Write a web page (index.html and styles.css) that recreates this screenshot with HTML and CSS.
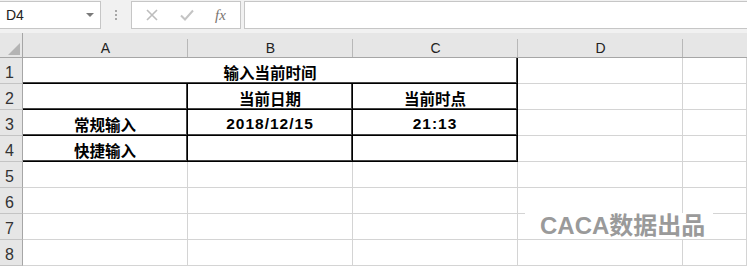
FILE: index.html
```html
<!DOCTYPE html>
<html lang="zh-CN">
<head>
    <meta charset="UTF-8">
    <title>输入当前时间</title>
    <link rel="stylesheet" href="styles.css">
</head>
<body>
    <div class="toolbar">
        <div class="namebox">
            <span class="cellref">D4</span>
            <span class="caret"></span>
        </div>
        <div class="grip"><i></i><i></i><i></i></div>
        <div class="fnbox">
            <svg class="icon" width="14" height="14" viewBox="0 0 14 14">
                <path d="M2 2 L12 12 M12 2 L2 12" stroke="#bdbdbd" stroke-width="1.6" fill="none"/>
            </svg>
            <svg class="icon" width="14" height="14" viewBox="0 0 14 14">
                <path d="M1 7.5 L5 11.5 L13 2.5" stroke="#c4c4c4" stroke-width="2" fill="none"/>
            </svg>
            <span class="fx">fx</span>
        </div>
        <div class="formula"></div>
    </div>

    <div class="sheet">
        <div class="corner"><span class="tri"></span></div>
        <div class="colhead">A</div>
        <div class="colhead">B</div>
        <div class="colhead">C</div>
        <div class="colhead">D</div>
        <div class="colhead last"></div>

        <div class="rowhead">1</div>
        <div class="cell b merged">输入当前时间</div>
        <div class="cell"></div>
        <div class="cell"></div>

        <div class="rowhead">2</div>
        <div class="cell b"></div>
        <div class="cell b">当前日期</div>
        <div class="cell b">当前时点</div>
        <div class="cell"></div>
        <div class="cell"></div>

        <div class="rowhead">3</div>
        <div class="cell b">常规输入</div>
        <div class="cell b num">2018/12/15</div>
        <div class="cell b num">21:13</div>
        <div class="cell"></div>
        <div class="cell"></div>

        <div class="rowhead">4</div>
        <div class="cell b">快捷输入</div>
        <div class="cell b"></div>
        <div class="cell b"></div>
        <div class="cell"></div>
        <div class="cell"></div>

        <div class="rowhead">5</div>
        <div class="cell"></div><div class="cell"></div><div class="cell"></div><div class="cell"></div><div class="cell"></div>
        <div class="rowhead">6</div>
        <div class="cell"></div><div class="cell"></div><div class="cell"></div><div class="cell"></div><div class="cell"></div>
        <div class="rowhead">7</div>
        <div class="cell"></div><div class="cell"></div><div class="cell"></div><div class="cell"></div><div class="cell"></div>
        <div class="rowhead">8</div>
        <div class="cell"></div><div class="cell"></div><div class="cell"></div><div class="cell"></div><div class="cell"></div>
    </div>

    <div class="watermark">CACA数据出品</div>
</body>
</html>
```

FILE: styles.css
```css
* {
    box-sizing: border-box;
}
body {
    margin: 0;
    width: 747px;
    height: 269px;
    overflow: hidden;
    background-color: white;
    font-family: "Liberation Sans", "Noto Sans CJK SC", sans-serif;
    color: #000;
    position: relative;
}
.toolbar {
    display: flex;
    height: 33px;
    padding-top: 1px;
    background-color: #f1f1f1;
}
.namebox {
    width: 101px;
    height: 28px;
    background-color: white;
    border: 1px solid #c6c6c6;
    border-left: none;
    display: flex;
    align-items: center;
    justify-content: space-between;
    padding: 0 6px 0 6px;
}
.cellref {
    font-size: 14px;
    color: #222;
}
.caret {
    width: 0;
    height: 0;
    border-left: 4px solid transparent;
    border-right: 4px solid transparent;
    border-top: 4px solid #7a7a7a;
}
.grip {
    width: 30px;
    height: 28px;
    display: flex;
    flex-direction: column;
    align-items: center;
    justify-content: center;
    gap: 2px;
}
.grip i {
    width: 2px;
    height: 2px;
    background-color: #a8a8a8;
}
.fnbox {
    width: 110px;
    height: 28px;
    background-color: white;
    border: 1px solid #c6c6c6;
    display: flex;
    align-items: center;
    padding-left: 13px;
}
.fnbox .icon {
    margin-right: 21px;
}
.fx {
    font-family: "Liberation Serif", serif;
    font-style: italic;
    font-size: 15px;
    color: #7a7470;
}
.formula {
    flex: 1;
    height: 28px;
    margin-left: 3px;
    background-color: white;
    border: 1px solid #c6c6c6;
    border-right: none;
}
.sheet {
    display: grid;
    grid-template-columns: 23px 165px 165px 165px 165px 1fr;
    grid-template-rows: 25px repeat(8, 26px) 1fr;
}
.corner {
    background-color: #e6e6e6;
    border-right: 1px solid #a6a6a6;
    border-bottom: 1px solid #a6a6a6;
    display: flex;
    align-items: flex-end;
    justify-content: flex-end;
    padding: 0 2px 2px 0;
}
.tri {
    width: 0;
    height: 0;
    border-left: 12px solid transparent;
    border-bottom: 12px solid #b4b4b4;
}
.colhead {
    background: linear-gradient(#b8b8b8, #b8b8b8) right bottom / 1px 18px no-repeat, #e6e6e6;
    border-bottom: 1px solid #a6a6a6;
    display: flex;
    align-items: flex-end;
    justify-content: center;
    padding-bottom: 1px;
    font-size: 14px;
    color: #222;
}
.colhead.last {
    background: #e6e6e6;
}
.rowhead {
    background-color: #e6e6e6;
    border-right: 1px solid #a6a6a6;
    border-bottom: 1px solid #c4c4c4;
    display: flex;
    align-items: flex-end;
    padding: 0 0 1px 5px;
    font-size: 16px;
    color: #333;
}
.cell {
    border-right: 1px solid #d4d4d4;
    border-bottom: 1px solid #d4d4d4;
    display: flex;
    align-items: center;
    justify-content: center;
    font-size: 15.5px;
    font-weight: bold;
    padding-top: 2px;
}
.cell.b {
    border-right-color: #000;
    border-bottom-color: #000;
    box-shadow: inset -1px -1px 0 #444;
}
.merged {
    grid-column: span 3;
}
.num {
    letter-spacing: 1px;
}
.watermark {
    position: absolute;
    left: 525px;
    top: 213px;
    width: 188px;
    height: 26px;
    background-color: white;
    color: #9a9a9a;
    font-size: 24px;
    font-weight: bold;
    line-height: 26px;
    padding-left: 15px;
}
```
